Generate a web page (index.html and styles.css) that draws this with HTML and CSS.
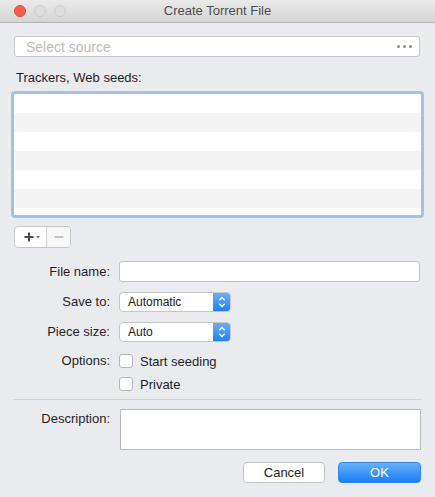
FILE: index.html
```html
<!DOCTYPE html>
<html>
<head>
<meta charset="utf-8">
<link rel="stylesheet" href="styles.css">
</head>
<body>
<div class="window">
  <div class="titlebar">
    <div class="lights">
      <span class="light close"></span>
      <span class="light idle"></span>
      <span class="light idle"></span>
    </div>
    <div class="title">Create Torrent File</div>
    <div></div>
  </div>
  <div class="main">
    <div class="source">
      <span class="placeholder">Select source</span>
      <span class="dots"><i></i><i></i><i></i></span>
    </div>
    <div class="section-label">Trackers, Web seeds:</div>
    <div class="list"></div>
    <div class="segmented">
      <span class="seg seg-add">
        <svg width="16" height="12" viewBox="0 0 16 12"><path d="M5 1.5v9M0.5 6h9" stroke="#4a4a4a" stroke-width="2" fill="none"/><path d="M12 5h4l-2 2.2z" fill="#6a6a6a"/></svg>
      </span>
      <span class="seg seg-remove">
        <svg width="10" height="4" viewBox="0 0 10 4"><path d="M0.5 2h9" stroke="#b4b4b4" stroke-width="1.6"/></svg>
      </span>
    </div>
    <div class="form">
      <label class="lbl">File name:</label>
      <div class="field"></div>
      <label class="lbl">Save to:</label>
      <div class="popup"><span class="popup-text">Automatic</span><span class="stepper"><svg width="18" height="20" viewBox="0 0 18 20"><path d="M6.3 8.2 9 5.5l2.7 2.7M6.3 11.8 9 14.5l2.7-2.7" stroke="#fff" stroke-width="1.3" fill="none"/></svg></span></div>
      <label class="lbl">Piece size:</label>
      <div class="popup"><span class="popup-text">Auto</span><span class="stepper"><svg width="18" height="20" viewBox="0 0 18 20"><path d="M6.3 8.2 9 5.5l2.7 2.7M6.3 11.8 9 14.5l2.7-2.7" stroke="#fff" stroke-width="1.3" fill="none"/></svg></span></div>
      <label class="lbl lbl-top">Options:</label>
      <div class="checks">
        <div class="check"><span class="box"></span><span>Start seeding</span></div>
        <div class="check"><span class="box"></span><span>Private</span></div>
      </div>
    </div>
    <div class="separator"></div>
    <div class="desc-row">
      <label class="lbl desc-lbl">Description:</label>
      <div class="textarea"></div>
    </div>
    <div class="actions">
      <button class="btn cancel">Cancel</button>
      <button class="btn ok">OK</button>
    </div>
  </div>
</div>
</body>
</html>
```

FILE: styles.css
```css
html, body {
  margin: 0;
  padding: 0;
}
body {
  width: 435px;
  height: 497px;
  overflow: hidden;
  background: #e9ebef;
  font-family: "Liberation Sans", Arial, sans-serif;
  font-size: 13px;
  color: #1f1f1f;
}
.window {
  display: flex;
  flex-direction: column;
}
.titlebar {
  height: 22px;
  border-bottom: 1px solid #b3b3b3;
  background: linear-gradient(#ebeaeb, #d6d5d6);
  display: grid;
  grid-template-columns: 1fr auto 1fr;
  align-items: center;
}
.lights {
  display: flex;
  gap: 8px;
  padding-left: 14px;
}
.light {
  width: 12px;
  height: 12px;
  border-radius: 50%;
  box-sizing: border-box;
}
.light.close {
  background: #fc5d57;
  border: 1px solid #e2463f;
}
.light.idle {
  background: #dedddf;
  border: 1px solid #cbcacc;
}
.title {
  color: #4d4d4d;
  font-size: 13px;
  line-height: 16px;
}
.main {
  padding: 0 15px 0 14px;
  display: flex;
  flex-direction: column;
}
.source {
  margin-top: 13px;
  height: 21px;
  box-sizing: border-box;
  background: #fff;
  border: 1px solid #c9c9c9;
  border-radius: 3px;
  display: flex;
  align-items: center;
  padding: 0 7px 0 11px;
}
.placeholder {
  flex: 1;
  color: #bcbcbc;
  font-size: 14px;
}
.dots {
  display: flex;
  gap: 3px;
}
.dots i {
  width: 3px;
  height: 3px;
  border-radius: 50%;
  background: #8f8f8f;
}
.section-label {
  margin-top: 13px;
  padding-left: 2px;
  line-height: 16px;
}
.list {
  margin: 5px -4px 0 -3px;
  height: 127px;
  box-sizing: border-box;
  border: 3px solid #a0c1ea;
  border-radius: 4px;
  background: repeating-linear-gradient(to bottom, #ffffff 0 19px, #f4f4f5 19px 38px);
}
.segmented {
  margin-top: 8px;
  width: 57px;
  height: 22px;
  box-sizing: border-box;
  border: 1px solid #c7c7c7;
  border-radius: 4px;
  background: #fff;
  display: flex;
}
.seg {
  display: flex;
  align-items: center;
  justify-content: center;
}
.seg-add {
  width: 32px;
  border-right: 1px solid #d2d2d2;
  padding-left: 2px;
  box-sizing: border-box;
}
.seg-remove {
  flex: 1;
  background: #f7f7f8;
  border-radius: 0 3px 3px 0;
}
.form {
  margin-top: 13px;
  display: grid;
  grid-template-columns: 96px 1fr;
  column-gap: 9px;
  row-gap: 10px;
  align-items: center;
}
.lbl {
  text-align: right;
  line-height: 16px;
}
.lbl-top {
  align-self: start;
  line-height: 18px;
}
.field {
  height: 21px;
  box-sizing: border-box;
  background: #fff;
  border: 1px solid #c3c3c3;
  border-radius: 3px;
}
.popup {
  width: 112px;
  height: 20px;
  box-sizing: border-box;
  background: #fff;
  border: 1px solid #c6c6c6;
  border-radius: 4px;
  display: flex;
  align-items: center;
  overflow: hidden;
}
.popup-text {
  flex: 1;
  padding-left: 8px;
  font-size: 12px;
  color: #202020;
}
.stepper {
  width: 18px;
  height: 20px;
  margin-right: -1px;
  background: linear-gradient(#6cb2fb, #1b7ef3);
  display: flex;
}
.checks {
  margin-top: 0px;
  display: flex;
  flex-direction: column;
  gap: 5px;
}
.check {
  height: 18px;
  display: flex;
  align-items: center;
  gap: 7px;
}
.box {
  width: 14px;
  height: 14px;
  box-sizing: border-box;
  background: #fff;
  border: 1px solid #b6b6b6;
  border-radius: 3px;
}
.separator {
  margin: 6px -1px 0 -1px;
  height: 1px;
  background: #d2d3d6;
}
.desc-row {
  margin-top: 9px;
  display: grid;
  grid-template-columns: 96px 1fr;
  column-gap: 10px;
  align-items: start;
}
.desc-lbl {
  padding-top: 2px;
}
.textarea {
  height: 41px;
  margin-right: -1px;
  box-sizing: border-box;
  background: #fff;
  border: 1px solid #bcbcbc;
}
.actions {
  margin-top: 12px;
  display: flex;
  justify-content: flex-end;
  gap: 13px;
  margin-right: -1px;
}
.btn {
  height: 21px;
  box-sizing: border-box;
  font-family: "Liberation Sans", Arial, sans-serif;
  font-size: 13px;
  border-radius: 4px;
  padding: 0;
  line-height: 19px;
}
.cancel {
  width: 82px;
  background: #fff;
  border: 1px solid #c4c4c4;
  color: #1f1f1f;
}
.ok {
  width: 83px;
  background: linear-gradient(#68b0fa, #1a7ff4);
  border: 1px solid #2d87ee;
  color: #fff;
}
```
